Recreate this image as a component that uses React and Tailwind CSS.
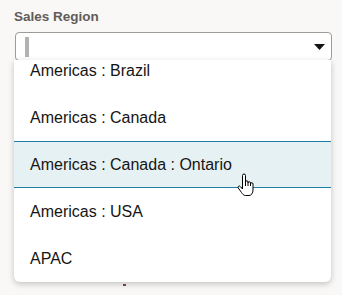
const regions = [
  'Americas : Brazil',
  'Americas : Canada',
  'Americas : Canada : Ontario',
  'Americas : USA',
  'APAC',
];

const HandCursor = () => (
  <svg
    width="18"
    height="24"
    viewBox="0 0 18 24"
    className="absolute left-[237px] top-[173px]"
  >
    <path
      d="M5.5 2.5a1.5 1.5 0 0 1 3 0V9a1.25 1.25 0 0 1 2.5 0v1a1.25 1.25 0 0 1 2.5 0v1a1.25 1.25 0 0 1 2.5 0v6c0 3-1.5 5.5-4 5.5H8.5c-2 0-3-1.5-4-3L1.3 15a1.2 1.2 0 0 1 1.9-1.5L5.5 16Z"
      fill="#fff"
      stroke="#000"
      strokeWidth="1"
      strokeLinejoin="round"
    />
    <path d="M8.5 9v4M11 10v3M13.5 11v2" stroke="#000" strokeWidth="1" />
  </svg>
);

export default function App() {
  return (
    <div
      className="relative w-[342px] min-h-[295px] bg-[#f9f8f7] pt-[9px] pl-[15px]"
      style={{ fontFamily: '"Liberation Sans", Arial, sans-serif' }}
    >
      <p className="text-[13.5px] leading-[16px] font-bold text-[#615c57] -ml-px">Sales Region</p>

      <div className="mt-[7px] h-[29px] w-[317px] bg-white border border-[#9f9b97] rounded-[4px] flex items-center justify-between pl-[9px] pr-[6px]">
        <span className="block w-[4px] h-[20px] bg-[#b4b2b0]" />
        <svg width="11" height="6" viewBox="0 0 11 6">
          <path d="M0 0h11L5.5 6Z" fill="#161513" />
        </svg>
      </div>

      <span className="absolute left-[123px] top-[284px] w-[3px] h-[2px] bg-[#7a4a4a]" />

      <div className="absolute left-[14px] top-[60px] w-[317px] h-[222px] bg-white rounded-b-[6px] shadow-[0_2px_6px_rgba(0,0,0,0.22)] overflow-hidden">
        <ul className="-mt-[13px]">
          {regions.map((r) => {
            const active = r === 'Americas : Canada : Ontario';
            return (
              <li
                key={r}
                className={`h-[47px] flex items-center pl-[16px] text-[16px] text-[#161513] ${
                  active ? 'bg-[#e6f1f4] border-y border-[#1c7fa6]' : ''
                }`}
              >
                {r}
              </li>
            );
          })}
        </ul>
      </div>

      <HandCursor />
    </div>
  );
}
